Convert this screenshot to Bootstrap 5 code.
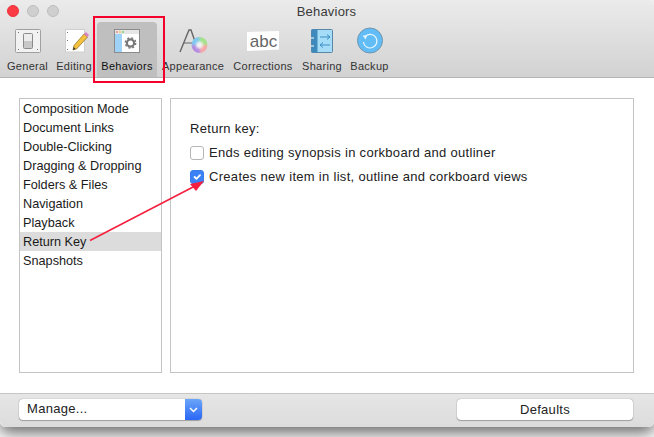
<!DOCTYPE html>
<html lang="en">
<head>
  <meta charset="UTF-8">
  <title>Behaviors</title>
  <link href="https://cdn.jsdelivr.net/npm/bootstrap@5.3.2/dist/css/bootstrap.min.css" rel="stylesheet">
  <style>
    html, body { height: 437px; overflow: hidden; background: #fff; }
    body { font-family: "Liberation Sans", Arial, sans-serif; font-size: 13px; letter-spacing: .3px; color: #222; position: relative; }
    .mac-window { height: 427px; background: #fff; border-radius: 5px; box-shadow: 0 6px 16px rgba(0,0,0,.6); }
    .mac-top { height: 78px; background: linear-gradient(#ebebeb, #d2d2d2); border-bottom: 1px solid #b4b4b4; border-radius: 5px 5px 0 0; }
    .title-row { height: 22px; }
    .light { width: 12px; height: 12px; border-radius: 50%; background: #cfcfcf; border: 1px solid #bdbdbd; }
    .light-red { background: #fc3b45; border-color: #e8323c; }
    .lights { left: 7px; top: 5px; gap: 8px; }
    .window-title { font-size: 13px; letter-spacing: .2px; color: #3a3a3a; line-height: 24px; padding-right: 1px; }
    .tool-row { padding-left: 7px; height: 55px; }
    .tool-item { font-size: 11px; letter-spacing: .28px; line-height: 13px; height: 55px; color: #333; white-space: nowrap; padding-top: 4px; }
    .tool-item svg { display: block; height: 28px; margin-bottom: 6px; }
    .w-general { width: 41px; margin-right: 8px; }
    .w-editing { width: 36px; margin-right: 5px; }
    .w-behaviors { width: 60px; margin-right: 5px; background: #bfbfbf; border-radius: 4px 4px 0 0; color: #111; }
    .w-appearance { width: 61px; margin-right: 10px; }
    .w-corrections { width: 60px; margin-right: 9px; }
    .w-sharing { width: 40px; margin-right: 8px; }
    .w-backup { width: 39px; }
    .content-area { height: 315px; padding: 20px 20px 20px 19px; gap: 8px; }
    .side-list { width: 143px; height: 275px; border: 1px solid #c4c4c4; }
    .side-item { height: 19px; line-height: 21px; padding-left: 3px; color: #1a1a1a; font-size: 12.7px; letter-spacing: 0; }
    .side-item-active { background: #dcdcdc; }
    .prefs-panel { width: 464px; height: 275px; border: 1px solid #c4c4c4; padding: 21px 0 0 19px; }
    .prefs-heading { line-height: 18px; margin-bottom: 3px; }
    .pref-check { height: 24px; gap: 5px; }
    .pref-check .form-check-input { width: 14px; height: 14px; margin: 0; border: 1px solid #b5b5b5; border-radius: 3px; box-shadow: none; flex: none; }
    .pref-check .form-check-input:checked { background-color: #3b82f6; border-color: #3b7de8; }
    .pref-check label { color: #222; }
    .mac-foot { height: 34px; background: linear-gradient(#e6e6e6, #dcdcdc); border-top: 1px solid #c6c6c6; padding: 5px 21px 0 19px; border-radius: 0 0 5px 5px; }
    .manage-select { width: 183px; height: 21px; background: #fff; border-radius: 4px; box-shadow: 0 0 1px rgba(0,0,0,.5), 0 1px 1px rgba(0,0,0,.25); overflow: hidden; }
    .manage-label { padding-left: 8px; line-height: 20px; color: #222; }
    .manage-arrow { width: 17px; height: 21px; background: linear-gradient(#6aa6f8, #2a66f6); }
    .defaults-btn { width: 176px; height: 21px; padding: 0; font-size: 13px; letter-spacing: .3px; line-height: 20px; background: #fff; border: 0; border-radius: 4px; color: #222; box-shadow: 0 0 1px rgba(0,0,0,.5), 0 1px 1px rgba(0,0,0,.25); }
    .callout-box { left: 93px; top: 16px; width: 72px; height: 67px; border: 2px solid #f5002b; }
    .callout-arrow { left: 0; top: 0; width: 654px; height: 437px; pointer-events: none; }
  </style>
</head>
<body>

<div class="mac-window overflow-hidden">
  <div class="mac-top position-relative">
    <div class="d-flex position-absolute lights">
      <span class="light light-red"></span><span class="light"></span><span class="light"></span>
    </div>
    <div class="title-row text-center window-title">Behaviors</div>
    <div class="d-flex tool-row">
      <div class="tool-item w-general text-center">
        <svg class="mx-auto" width="28" height="28" viewBox="0 0 28 28"><rect x="1.5" y="3.5" width="25" height="23" rx="1" fill="#f2f2f2" stroke="#a0a0a0"/><rect x="9.5" y="7.5" width="9" height="15" rx="1" fill="#ececec" stroke="#8a8a8a"/><rect x="10" y="15" width="8" height="7" fill="#c8c8c8"/><g fill="#777"><rect x="4" y="6" width="1" height="1"/><rect x="23" y="6" width="1" height="1"/><rect x="4" y="23" width="1" height="1"/><rect x="23" y="23" width="1" height="1"/></g></svg>
        General
      </div>
      <div class="tool-item w-editing text-center">
        <svg class="mx-auto" width="30" height="28" viewBox="0 0 30 28"><rect x="6.5" y="3.5" width="19" height="22.5" fill="#fff" stroke="#cfcfcf"/><g fill="#777"><rect x="8" y="6" width="1" height="1"/><rect x="8" y="14" width="1" height="1"/><rect x="8" y="23" width="1" height="1"/></g><path d="M14 24 L15 19.5 L25 8 L28.5 11 L17.5 23 Z" fill="#f4c23c" stroke="#8a6a20" stroke-width=".7"/><path d="M25 8 L27 6 L30 9 L28.5 11 Z" fill="#d982c8"/><path d="M14 24 L14.7 21 L16.6 22.8 Z" fill="#333"/></svg>
        Editing
      </div>
      <div class="tool-item w-behaviors text-center">
        <svg class="mx-auto" width="28" height="28" viewBox="0 0 28 28"><rect x="1.5" y="3.5" width="25" height="23" fill="#fff" stroke="#8b8b8b"/><rect x="2" y="4" width="24" height="4" fill="#e6e6e6"/><rect x="2" y="8" width="7" height="18" fill="#9fd2f7"/><circle cx="4" cy="6" r="1" fill="#f28b7d"/><circle cx="7" cy="6" r="1" fill="#f2c75c"/><circle cx="10" cy="6" r="1" fill="#7fcf6a"/><circle cx="17.5" cy="17" r="3.6" fill="none" stroke="#777" stroke-width="2.2"/><circle cx="17.5" cy="17" r="5.2" fill="none" stroke="#777" stroke-width="1.4" stroke-dasharray="2 2.1"/></svg>
        Behaviors
      </div>
      <div class="tool-item w-appearance text-center">
        <svg class="mx-auto" width="30" height="28" viewBox="0 0 30 28">
          <defs><filter id="soften"><feGaussianBlur stdDeviation="1"/></filter><clipPath id="wheel"><circle cx="21.5" cy="19" r="8"/></clipPath></defs>
          <path d="M2 26 L11 4 L13 4 L20 24" fill="none" stroke="#666" stroke-width="1.4"/><path d="M6 17 H15" stroke="#666" stroke-width="1.2"/>
          <g clip-path="url(#wheel)"><g filter="url(#soften)"><rect x="12" y="9" width="10" height="10" fill="#7fc8f0"/><rect x="21.5" y="9" width="10" height="10" fill="#a5e28a"/><rect x="21.5" y="19" width="10" height="10" fill="#f7a8a8"/><rect x="12" y="19" width="10" height="10" fill="#b48de0"/></g><circle cx="21.5" cy="19" r="3.5" fill="#f2f2f2" filter="url(#soften)"/></g>
        </svg>
        Appearance
      </div>
      <div class="tool-item w-corrections text-center">
        <svg class="mx-auto" width="32" height="28" viewBox="0 0 32 28"><path d="M0 6 L32 5 V23.5 L0 25 Z" fill="#fff"/><text x="16.5" y="20.5" font-size="17" letter-spacing="0" text-anchor="middle" fill="#666" font-family="Liberation Sans, sans-serif">abc</text></svg>
        Corrections
      </div>
      <div class="tool-item w-sharing text-center">
        <svg class="mx-auto" width="22" height="28" viewBox="0 0 22 28"><rect x=".5" y="3.5" width="21" height="23" rx="1" fill="#a5dcf7" stroke="#5a87a8"/><rect x=".5" y="3.5" width="6" height="23" fill="#3f8abc"/><path d="M0 12 H3 M0 20 H3" stroke="#fff"/><path d="M9 11 H19 M16 8.5 L19 11 L16 13.5 M19 19 H9 M12 16.5 L9 19 L12 21.5" fill="none" stroke="#3d8fc7"/></svg>
        Sharing
      </div>
      <div class="tool-item w-backup text-center">
        <svg class="mx-auto" width="28" height="28" viewBox="0 0 28 28"><circle cx="14" cy="14.5" r="12.5" fill="#62bdf7" stroke="#6f95ad"/><path d="M9.2 10.5 A6.8 6.8 0 1 1 7.4 16" fill="none" stroke="#e8f6ff" stroke-width="1.2"/><path d="M6.6 9.6 L11 9.4 L9.6 13.4 Z" fill="#e8f6ff"/></svg>
        Backup
      </div>
    </div>
  </div>

  <div class="d-flex content-area">
    <div class="side-list">
      <div class="side-item">Composition Mode</div>
      <div class="side-item">Document Links</div>
      <div class="side-item">Double-Clicking</div>
      <div class="side-item">Dragging &amp; Dropping</div>
      <div class="side-item">Folders &amp; Files</div>
      <div class="side-item">Navigation</div>
      <div class="side-item">Playback</div>
      <div class="side-item side-item-active">Return Key</div>
      <div class="side-item">Snapshots</div>
    </div>
    <div class="prefs-panel">
      <div class="prefs-heading">Return key:</div>
      <div class="d-flex align-items-center pref-check">
        <input class="form-check-input" type="checkbox" id="opt1">
        <label for="opt1">Ends editing synopsis in corkboard and outliner</label>
      </div>
      <div class="d-flex align-items-center pref-check">
        <input class="form-check-input" type="checkbox" id="opt2" checked>
        <label for="opt2">Creates new item in list, outline and corkboard views</label>
      </div>
    </div>
  </div>

  <div class="d-flex justify-content-between mac-foot">
    <div class="d-flex justify-content-between manage-select">
      <span class="manage-label">Manage...</span>
      <span class="d-flex align-items-center justify-content-center manage-arrow">
        <svg width="9" height="6" viewBox="0 0 9 6"><path d="M1 1 L4.5 4.5 L8 1" fill="none" stroke="#fff" stroke-width="1.5"/></svg>
      </span>
    </div>
    <button class="btn defaults-btn" type="button">Defaults</button>
  </div>
</div>

<div class="position-absolute callout-box"></div>
<svg class="position-absolute callout-arrow" viewBox="0 0 654 437"><path d="M90 240.5 L195 186" stroke="#f5203f" stroke-width="1.6" fill="none"/><path d="M204 181 L190 184 L196 191 Z" fill="#f5203f"/></svg>

<script src="https://cdn.jsdelivr.net/npm/bootstrap@5.3.2/dist/js/bootstrap.bundle.min.js"></script>
</body>
</html>
